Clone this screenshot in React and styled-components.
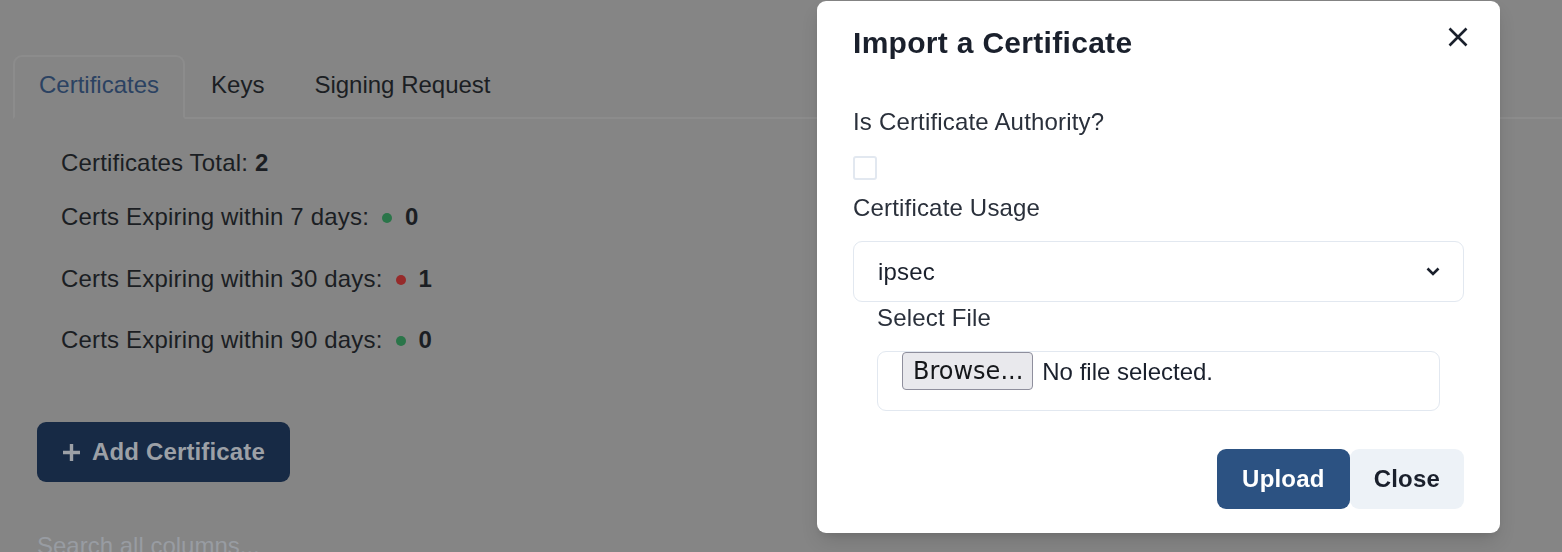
import React from 'react';
import styled, {createGlobalStyle} from 'styled-components';

const GlobalStyle = createGlobalStyle`
html, body {
  margin: 0;
  padding: 0;
  height: 100%;
  overflow: hidden;
}
body {
  background: #858585;
  font-family: "Liberation Sans", Arial, sans-serif;
  color: #1b1e23;
}
`;

const Page = styled.div`
padding: 55px 0 0 13px;
`;

const TabList = styled.div`
display: flex;
border-bottom: 2px solid #8c8c8c;
`;

const Tab = styled.div`
padding: 10px 24px 14px;
margin-right: ${p => (p.$active ? 0 : -2)}px;
font-size: 24px;
line-height: 36px;
border: 2px solid transparent;
border-radius: 9px 9px 0 0;
margin-bottom: -2px;
color: ${p => (p.$active ? '#2b4262' : '#1b1e23')};
${p => p.$active && `
  border-color: #8c8c8c;
  border-bottom-color: #858585;
`}
`;

const Panel = styled.div`
padding: 24px;
`;

const Stats = styled.div`
padding-left: 24px;
letter-spacing: 0.18px;
`;

const StatLine = styled.div`
display: flex;
align-items: center;
font-size: 24px;
line-height: 36px;
margin-top: ${p => p.$top}px;
white-space: pre;
`;

const Dot = styled.span`
width: 10px;
height: 10px;
border-radius: 50%;
background: ${p => p.$color};
margin: 2px 13px 0 13px;
`;

const Num = styled.b`
font-weight: 700;
`;

const AddButton = styled.button`
display: flex;
align-items: center;
gap: 11px;
height: 60px;
margin-top: 64px;
padding: 0 25px;
border: none;
border-radius: 9px;
background: #172a45;
color: #9ca0a6;
font-family: "Liberation Sans", Arial, sans-serif;
font-size: 24px;
font-weight: 700;
letter-spacing: 0.15px;
`;

const SearchInput = styled.input`
display: block;
margin-top: 46px;
padding: 0;
border: none;
background: transparent;
font-family: "Liberation Sans", Arial, sans-serif;
font-size: 24px;
line-height: 36px;
height: 36px;
width: 400px;
&::placeholder {
  color: #989ca2;
}
`;

const Overlay = styled.div`
position: fixed;
inset: 0;
display: flex;
justify-content: flex-end;
align-items: flex-start;
padding: 1px 62px 0 0;
`;

const Modal = styled.div`
position: relative;
width: 683px;
background: #fff;
border-radius: 9px;
box-shadow: 0 10px 20px -4px rgba(0, 0, 0, 0.15), 0 4px 8px -2px rgba(0, 0, 0, 0.08);
color: #1a202c;
letter-spacing: 0.18px;
`;

const Header = styled.div`
padding: 24px 36px;
font-size: 30px;
line-height: 36px;
font-weight: 700;
letter-spacing: 0.3px;
`;

const CloseX = styled.button`
position: absolute;
top: 12px;
right: 18px;
width: 48px;
height: 48px;
display: flex;
align-items: center;
justify-content: center;
border: none;
background: transparent;
padding: 0;
`;

const Body = styled.div`
padding: 12px 36px 14px;
`;

const Label = styled.div`
font-size: 24px;
line-height: 36px;
margin-top: ${p => p.$top || 0}px;
color: #2a303b;
`;

const CheckBox = styled.span`
display: block;
width: 20px;
height: 20px;
margin-top: 16px;
border: 2px solid #e2e8f0;
border-radius: 3px;
`;

const Select = styled.div`
display: flex;
align-items: center;
justify-content: space-between;
height: 59px;
margin-top: 15px;
padding: 0 23px 0 24px;
border: 1px solid #e2e8f0;
border-radius: 9px;
font-size: 24px;
`;

const FileSection = styled.div`
padding: 0 24px;
`;

const FileBox = styled.div`
display: flex;
align-items: flex-start;
gap: 9px;
height: 58px;
margin-top: 15px;
padding: 0 24px;
border: 1px solid #e2e8f0;
border-radius: 9px;
font-size: 24px;
line-height: 40px;
letter-spacing: 0;
`;

const BrowseButton = styled.span`
display: block;
height: 36px;
padding: 0 9px 0 10px;
border: 1px solid #8f8f9d;
border-radius: 4px;
background: #e9e9ed;
font-family: "DejaVu Sans", sans-serif;
font-size: 24px;
line-height: 36px;
color: #15171a;
`;

const Footer = styled.div`
display: flex;
justify-content: flex-end;
padding: 24px 36px;
`;

const FooterButton = styled.button`
height: 60px;
padding: 0 ${p => (p.$primary ? 25 : 24)}px;
border: none;
border-radius: 9px;
background: ${p => (p.$primary ? '#2c5282' : '#edf2f7')};
color: ${p => (p.$primary ? '#fff' : '#1a202c')};
font-family: "Liberation Sans", Arial, sans-serif;
font-size: 24px;
font-weight: 700;
letter-spacing: 0.2px;
`;

function PlusIcon() {
  return (
    <svg width="19" height="19" viewBox="0 0 19 19">
      <path d="M9.5 1v17M1 9.5h17" stroke="#9ca0a6" strokeWidth="3.4" />
    </svg>
  );
}

function CrossIcon() {
  return (
    <svg width="20" height="20" viewBox="0 0 20 20">
      <path d="M1.5 1.5l17 17M18.5 1.5l-17 17" stroke="#1a202c" strokeWidth="2.6" />
    </svg>
  );
}

function Chevron() {
  return (
    <svg width="14" height="9" viewBox="0 0 14 9">
      <path d="M1.5 1.5l5.5 5.5 5.5-5.5" fill="none" stroke="#1a202c" strokeWidth="2.6" />
    </svg>
  );
}

const expiring = [
  {days: 7, count: 0, color: '#2a7549', top: 18},
  {days: 30, count: 1, color: '#962a2a', top: 26},
  {days: 90, count: 0, color: '#2a7549', top: 25},
];

export default function App() {
  return (
    <>
      <GlobalStyle />
      <Page>
        <TabList>
          <Tab $active>Certificates</Tab>
          <Tab>Keys</Tab>
          <Tab>Signing Request</Tab>
        </TabList>
        <Panel>
          <Stats>
            <StatLine $top={2}>
              Certificates Total: <Num>2</Num>
            </StatLine>
            {expiring.map(e => (
              <StatLine key={e.days} $top={e.top}>
                {`Certs Expiring within ${e.days} days:`}
                <Dot $color={e.color} />
                <Num>{e.count}</Num>
              </StatLine>
            ))}
          </Stats>
          <AddButton>
            <PlusIcon />
            Add Certificate
          </AddButton>
          <SearchInput placeholder="Search all columns..." />
        </Panel>
      </Page>

      <Overlay>
        <Modal>
          <Header>Import a Certificate</Header>
          <CloseX aria-label="Close">
            <CrossIcon />
          </CloseX>
          <Body>
            <Label $top={7}>Is Certificate Authority?</Label>
            <CheckBox />
            <Label $top={10}>Certificate Usage</Label>
            <Select>
              ipsec
              <Chevron />
            </Select>
            <FileSection>
              <Label $top={-2}>Select File</Label>
              <FileBox>
                <BrowseButton>Browse...</BrowseButton>
                No file selected.
              </FileBox>
            </FileSection>
          </Body>
          <Footer>
            <FooterButton $primary>Upload</FooterButton>
            <FooterButton>Close</FooterButton>
          </Footer>
        </Modal>
      </Overlay>
    </>
  );
}
